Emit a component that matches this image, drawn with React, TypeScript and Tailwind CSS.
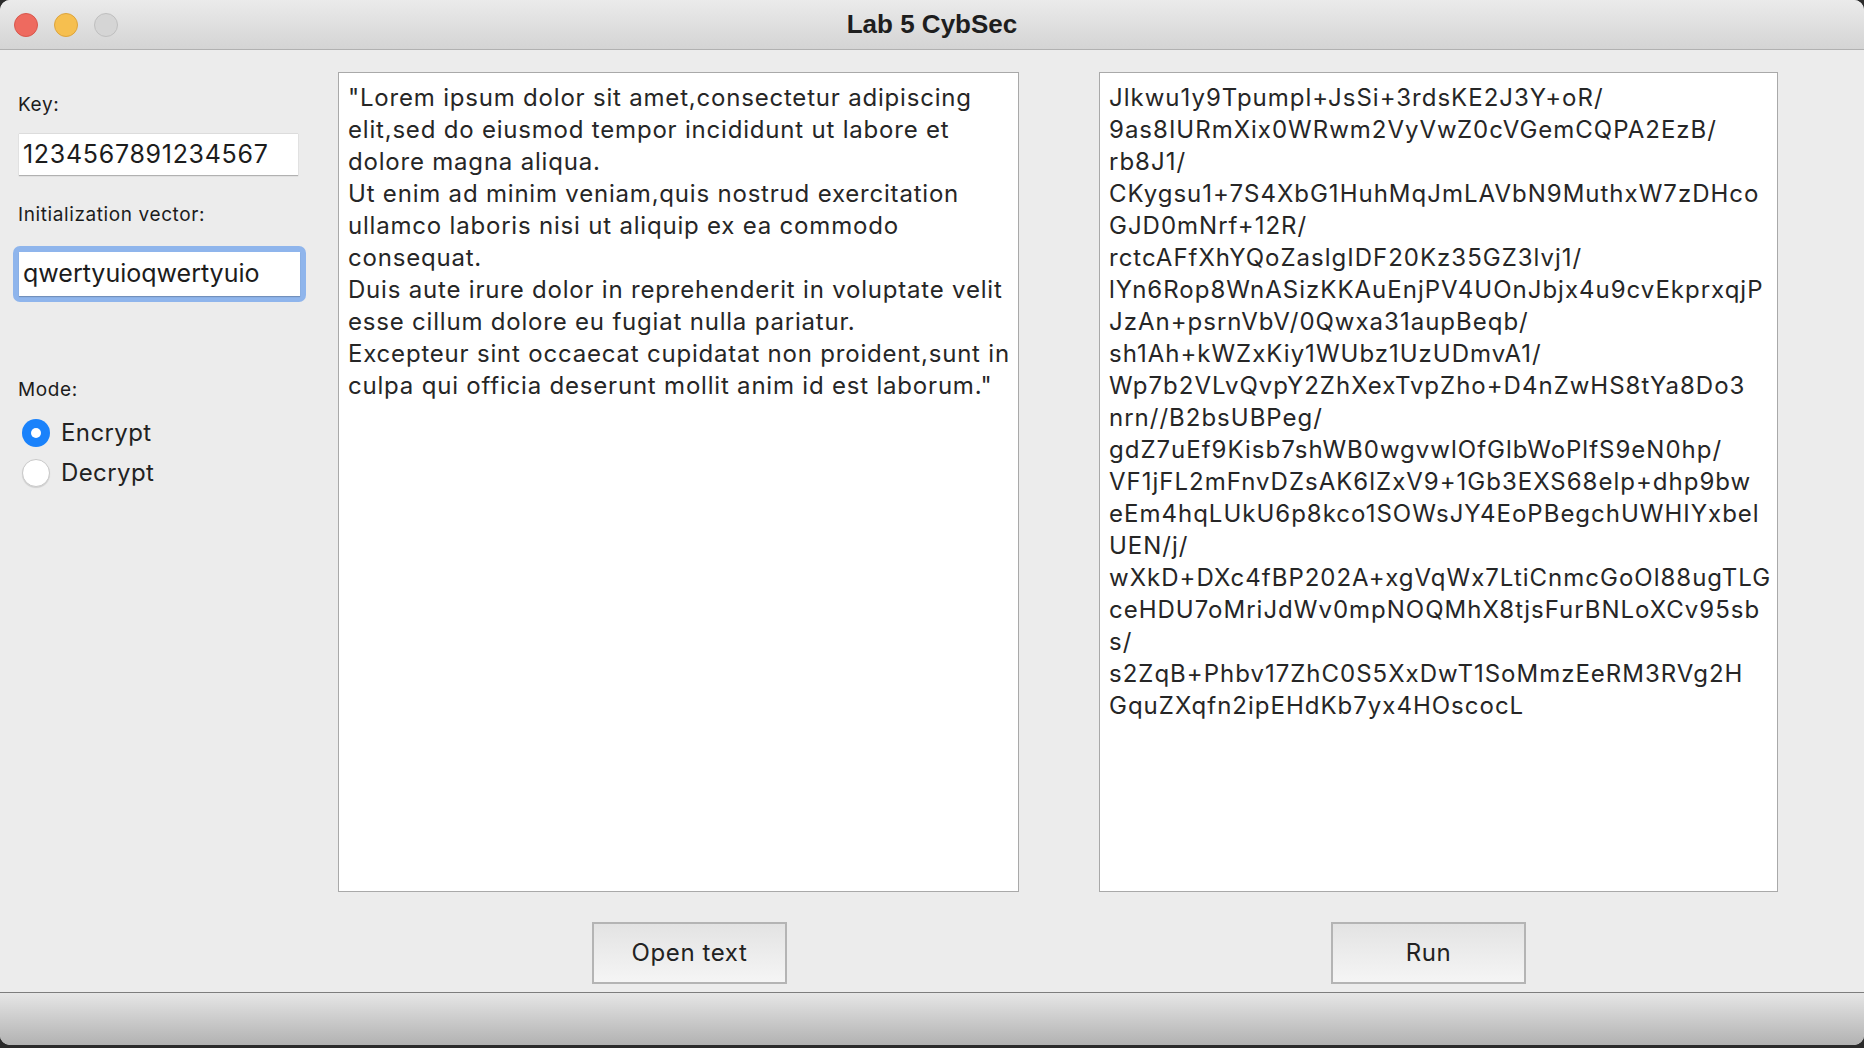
import React from "react";

const plainLines = [
  '"Lorem ipsum dolor sit amet,consectetur adipiscing',
  "elit,sed do eiusmod tempor incididunt ut labore et",
  "dolore magna aliqua.",
  "Ut enim ad minim veniam,quis nostrud exercitation",
  "ullamco laboris nisi ut aliquip ex ea commodo",
  "consequat.",
  "Duis aute irure dolor in reprehenderit in voluptate velit",
  "esse cillum dolore eu fugiat nulla pariatur.",
  "Excepteur sint occaecat cupidatat non proident,sunt in",
  'culpa qui officia deserunt mollit anim id est laborum."',
];

const cipherLines = [
  "Jlkwu1y9Tpumpl+JsSi+3rdsKE2J3Y+oR/",
  "9as8IURmXix0WRwm2VyVwZ0cVGemCQPA2EzB/",
  "rb8J1/",
  "CKygsu1+7S4XbG1HuhMqJmLAVbN9MuthxW7zDHco",
  "GJD0mNrf+12R/",
  "rctcAFfXhYQoZaslgIDF20Kz35GZ3lvj1/",
  "lYn6Rop8WnASizKKAuEnjPV4UOnJbjx4u9cvEkprxqjP",
  "JzAn+psrnVbV/0Qwxa31aupBeqb/",
  "sh1Ah+kWZxKiy1WUbz1UzUDmvA1/",
  "Wp7b2VLvQvpY2ZhXexTvpZho+D4nZwHS8tYa8Do3",
  "nrn//B2bsUBPeg/",
  "gdZ7uEf9Kisb7shWB0wgvwlOfGlbWoPlfS9eN0hp/",
  "VF1jFL2mFnvDZsAK6lZxV9+1Gb3EXS68elp+dhp9bw",
  "eEm4hqLUkU6p8kco1SOWsJY4EoPBegchUWHIYxbel",
  "UEN/j/",
  "wXkD+DXc4fBP202A+xgVqWx7LtiCnmcGoOl88ugTLG",
  "ceHDU7oMriJdWv0mpNOQMhX8tjsFurBNLoXCv95sb",
  "s/",
  "s2ZqB+Phbv17ZhC0S5XxDwT1SoMmzEeRM3RVg2H",
  "GquZXqfn2ipEHdKb7yx4HOscocL",
];

function TextPane({ lines, wide }: { lines: string[]; wide?: boolean }) {
  return (
    <div className="h-[820px] bg-white border border-[#a9a9a9] pt-[9px] pl-[9px] overflow-hidden">
      {lines.map((l, i) => (
        <div
          key={i}
          className={
            wide
              ? "whitespace-pre text-[24px] leading-[32px] tracking-[1px] text-[#262626]"
              : "whitespace-pre text-[24px] leading-[32px] tracking-[0.8px] text-[#262626]"
          }
        >
          {l}
        </div>
      ))}
    </div>
  );
}

function MacButton({ label }: { label: string }) {
  return (
    <button className="w-[195px] h-[62px] border-2 border-[#b4b4b4] bg-gradient-to-b from-[#e3e3e3] to-[#f5f5f5] text-[24px] tracking-[0.6px] text-[#222]">
      {label}
    </button>
  );
}

export default function App() {
  return (
    <div className="w-[1864px] h-[1048px] bg-[#2b2b2b] font-['Inter','Liberation_Sans',sans-serif]">
      <div className="h-[1045px] rounded-[10px] overflow-hidden flex flex-col bg-[#ececec]">
        {/* Title bar */}
        <div className="relative h-[50px] shrink-0 flex items-center pl-[14px] gap-[16px] bg-gradient-to-b from-[#ebebeb] to-[#d4d4d4] border-b border-[#b1b1b1]">
          <span className="w-[24px] h-[24px] rounded-full bg-[#ee6a5f] border border-[#d8574c]" />
          <span className="w-[24px] h-[24px] rounded-full bg-[#f6bf4f] border border-[#dda43c]" />
          <span className="w-[24px] h-[24px] rounded-full bg-[#d5d5d5] border border-[#bfbfbf]" />
          <div className="absolute inset-0 flex items-center justify-center font-['Liberation_Sans',sans-serif] font-bold text-[26px] text-[#1e1e1e]">
            Lab 5 CybSec
          </div>
        </div>

        {/* Body */}
        <div className="flex-1 flex flex-col">
          <div className="flex pt-[22px]">
            {/* Left controls */}
            <div className="w-[338px] shrink-0 flex flex-col pl-[18px] text-[#1c1c1c]">
              <div className="mt-[22px] text-[19px] leading-[22px] tracking-[0.6px]">Key:</div>
              <div className="mt-[17px] ml-[1px] w-[279px] h-[42px] bg-white border-t border-[#dcdcdc] shadow-[0_1px_1px_rgba(0,0,0,0.25)] flex items-center pl-[4px] text-[25px] tracking-[0.7px]">
                1234567891234567
              </div>
              <div className="mt-[29px] text-[19px] leading-[22px] tracking-[0.6px]">Initialization vector:</div>
              <div className="mt-[20px] -ml-[5px] w-[293px] h-[56px] rounded-[7px] bg-[#8fb5ec] p-[6px]">
                <div className="w-full h-full bg-white flex items-center pl-[4px] text-[25px] shadow-[0_1px_1px_rgba(0,0,0,0.2)]">
                  qwertyuioqwertyuio
                </div>
              </div>
              <div className="mt-[77px] text-[19px] leading-[22px] tracking-[0.6px]">Mode:</div>
              <div className="mt-[18px] flex flex-col gap-[12px] text-[24px] tracking-[0.4px] text-[#222]">
                <label className="flex items-center gap-[11px] h-[28px]">
                  <span className="ml-[4px] w-[28px] h-[28px] rounded-full bg-[#1a82fb] flex items-center justify-center">
                    <span className="w-[10px] h-[10px] rounded-full bg-white" />
                  </span>
                  Encrypt
                </label>
                <label className="flex items-center gap-[11px] h-[28px]">
                  <span className="ml-[4px] w-[28px] h-[28px] rounded-full bg-white border border-[#c9c9c9] shadow-[0_1px_1px_rgba(0,0,0,0.12)]" />
                  Decrypt
                </label>
              </div>
            </div>

            {/* Text panes */}
            <div className="w-[681px] shrink-0">
              <TextPane lines={plainLines} />
            </div>
            <div className="w-[679px] shrink-0 ml-[80px]">
              <TextPane lines={cipherLines} wide />
            </div>
          </div>

          {/* Buttons */}
          <div className="flex pt-[30px] pl-[592px] gap-[544px]">
            <MacButton label="Open text" />
            <MacButton label="Run" />
          </div>
        </div>

        {/* Bottom bar */}
        <div className="h-[53px] shrink-0 bg-gradient-to-b from-[#e6e6e6] to-[#b2b2b2] border-t border-[#7d7d7d]" />
      </div>
    </div>
  );
}
